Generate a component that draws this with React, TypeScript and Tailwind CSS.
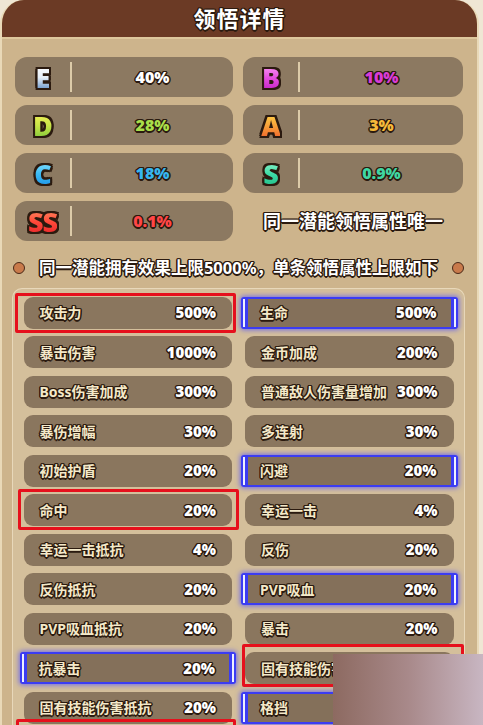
import React from "react";

const OUTLINE =
  "[text-shadow:-1px_-1px_0_#2b1a0f,1px_-1px_0_#2b1a0f,-1px_1px_0_#2b1a0f,1px_1px_0_#2b1a0f,0_1.5px_0_#2b1a0f,0_-1.5px_0_#2b1a0f,1.5px_0_0_#2b1a0f,-1.5px_0_0_#2b1a0f]";
const LETTER_EDGE =
  "[filter:drop-shadow(2px_0_0_#2b1a0f)_drop-shadow(-2px_0_0_#2b1a0f)_drop-shadow(0_2px_0_#2b1a0f)_drop-shadow(0_-2px_0_#2b1a0f)]";

type Rank = { letter: string; grad: string; value: string; color: string };

const ranks: (Rank | null)[] = [
  { letter: "E", grad: "from-[#ffffff] via-[#e6eef6] to-[#5f8ec4]", value: "40%", color: "text-[#ffffff]" },
  { letter: "B", grad: "from-[#fb9cf6] via-[#e64ee2] to-[#c31fc3]", value: "10%", color: "text-[#d83cd6]" },
  { letter: "D", grad: "from-[#f6f25a] via-[#c9e447] to-[#7fc83a]", value: "28%", color: "text-[#a9de4a]" },
  { letter: "A", grad: "from-[#ffd84a] via-[#f8a23a] to-[#ee5f2a]", value: "3%", color: "text-[#f6b93a]" },
  { letter: "C", grad: "from-[#8ae6ff] via-[#3cbcf4] to-[#1d93e6]", value: "18%", color: "text-[#36b6ef]" },
  { letter: "S", grad: "from-[#8ff5cf] via-[#3fdca6] to-[#1fbf8a]", value: "0.9%", color: "text-[#40d6a2]" },
  { letter: "SS", grad: "from-[#ff8a62] via-[#ff4a3a] to-[#e8222a]", value: "0.1%", color: "text-[#ff4646]" },
  null,
];

type Stat = { label: string; value: string; mark?: "red" | "blue"; red?: string };

const stats: Stat[] = [
  { label: "攻击力", value: "500%", mark: "red", red: "-left-[9px] -right-[4px] -top-[4px] -bottom-[4px]" },
  { label: "生命", value: "500%", mark: "blue" },
  { label: "暴击伤害", value: "1000%" },
  { label: "金币加成", value: "200%" },
  { label: "Boss伤害加成", value: "300%" },
  { label: "普通敌人伤害量增加", value: "300%" },
  { label: "暴伤增幅", value: "30%" },
  { label: "多连射", value: "30%" },
  { label: "初始护盾", value: "20%" },
  { label: "闪避", value: "20%", mark: "blue" },
  { label: "命中", value: "20%", mark: "red", red: "-left-[6px] -right-[7px] -top-[5px] -bottom-[4px]" },
  { label: "幸运一击", value: "4%" },
  { label: "幸运一击抵抗", value: "4%" },
  { label: "反伤", value: "20%" },
  { label: "反伤抵抗", value: "20%" },
  { label: "PVP吸血", value: "20%", mark: "blue" },
  { label: "PVP吸血抵抗", value: "20%" },
  { label: "暴击", value: "20%" },
  { label: "抗暴击", value: "20%", mark: "blue" },
  { label: "固有技能伤害", value: "20%", mark: "red", red: "-left-[3px] -right-[10px] -top-[8px] -bottom-[3px]" },
  { label: "固有技能伤害抵抗", value: "20%" },
  { label: "格挡", value: "20%", mark: "blue" },
  { label: "", value: "", mark: "red", red: "-left-[8px] -right-[4px] -top-[12px] -bottom-[4px]" },
  { label: "", value: "" },
];

function RankRow({ r }: { r: Rank }) {
  return (
    <div className="h-10 rounded-[12px] bg-[#8c7961] flex items-center">
      <div className="w-[55px] flex justify-center">
        <span
          className={`inline-block text-[27px] font-black leading-none tracking-[-1px] bg-gradient-to-b ${r.grad} bg-clip-text text-transparent ${LETTER_EDGE}`}
        >
          {r.letter}
        </span>
      </div>
      <div className="w-[2px] h-[30px] bg-[#dccba9]" />
      <div className={`flex-1 text-center text-[16px] font-black ${r.color} ${OUTLINE}`}>{r.value}</div>
    </div>
  );
}

function StatRow({ s }: { s: Stat }) {
  if (s.mark === "blue") {
    return (
      <div className="relative -mx-1 h-8 rounded-[3px] border-y-2 border-x-[7px] border-[#3b3cf3] bg-[#84705a] shadow-[0_0_5px_1px_rgba(80,80,255,0.75)] flex items-center justify-between pl-3 pr-[14px]">
        <span className="absolute -left-[5px] top-0 bottom-0 w-[2px] bg-[#eef0ff]" />
        <span className="absolute -right-[5px] top-0 bottom-0 w-[2px] bg-[#eef0ff]" />
        <span className={`text-[14px] font-bold text-[#f4e9c9] ${OUTLINE}`}>{s.label}</span>
        <span className={`text-[15px] font-black text-white ${OUTLINE}`}>{s.value}</span>
      </div>
    );
  }
  return (
    <div className="relative h-8 rounded-[9px] bg-[#8a765e] flex items-center justify-between px-4">
      <span className={`text-[14px] font-bold text-[#f4e9c9] whitespace-nowrap ${OUTLINE}`}>{s.label}</span>
      <span className={`text-[15px] font-black text-white ${OUTLINE}`}>{s.value}</span>
      {s.mark === "red" && (
        <span className={`absolute ${s.red} border-[3px] border-[#e6101c] rounded-[2px]`} />
      )}
    </div>
  );
}

export default function App() {
  return (
    <div className="relative w-[483px] h-[725px] overflow-hidden bg-[#efe6d4] font-['Noto_Sans','Noto_Sans_CJK_SC',sans-serif]">
      <div className="w-[479px] h-[725px] rounded-t-[24px] border-x-2 border-[#e9d9b8] bg-[#cdb48c] overflow-hidden">
        {/* Header */}
        <div className="h-[37px] bg-[#6b3a25] flex items-center justify-center">
          <span className={`text-[22px] font-bold tracking-[1px] text-white ${OUTLINE}`}>领悟详情</span>
        </div>
        <div className="h-[2px] bg-[#dec79d]" />

        {/* Ranks */}
        <div className="grid grid-cols-[218px_220px] gap-x-[10px] gap-y-2 px-[13px] pt-[18px]">
          {ranks.map((r, i) =>
            r ? (
              <RankRow key={i} r={r} />
            ) : (
              <div key={i} className="h-10 flex items-center justify-center">
                <span className={`text-[18px] font-bold text-white ${OUTLINE}`}>同一潜能领悟属性唯一</span>
              </div>
            )
          )}
        </div>

        {/* Note */}
        <div className="mt-4 ml-[11px] mr-[13px] h-[22px] flex items-center justify-between">
          <span className="w-3 h-3 rounded-full bg-[#c97a4b] border-[1.5px] border-[#4a2a18]" />
          <span className={`text-[16.5px] font-bold text-white ${OUTLINE}`}>
            同一潜能拥有效果上限5000%，单条领悟属性上限如下
          </span>
          <span className="w-3 h-3 rounded-full bg-[#c97a4b] border-[1.5px] border-[#4a2a18]" />
        </div>

        {/* Stat list */}
        <div className="mt-[9px] ml-[10px] w-[453px] h-[460px] rounded-t-[10px] border-[1.5px] border-b-0 border-[#e8d8ba] bg-[#d4bf9b] px-[10.5px] pt-[7.5px]">
          <div className="grid grid-cols-2 gap-x-[13px] gap-y-[7.5px]">
            {stats.map((s, i) => (
              <StatRow key={i} s={s} />
            ))}
          </div>
        </div>
      </div>

      {/* watermark smear */}
      <div className="absolute left-[333px] top-[654px] w-[150px] h-[71px] bg-gradient-to-r from-[#8d6a61] via-[#a8898a] to-[#c8b6c2]" />
    </div>
  );
}
